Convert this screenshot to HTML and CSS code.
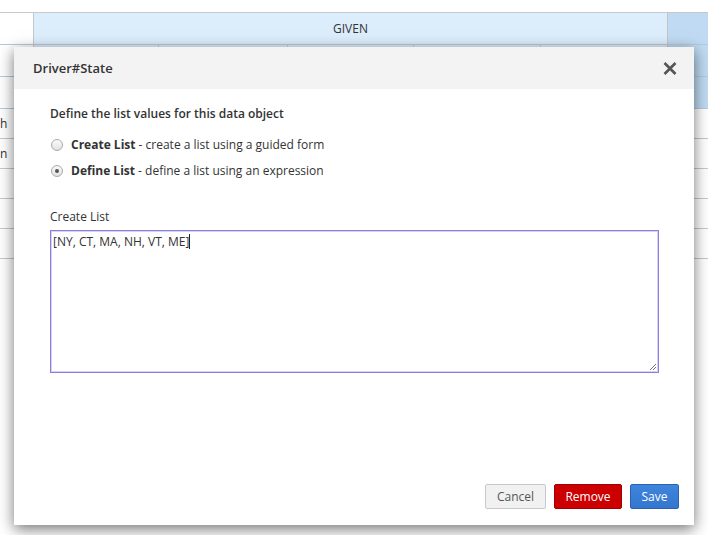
FILE: index.html
```html
<!DOCTYPE html>
<html>
<head>
<meta charset="utf-8">
<link rel="stylesheet" href="styles.css">
</head>
<body>
<div class="sheet">
  <div class="row row-head">
    <div class="c c0"></div>
    <div class="c given">GIVEN</div>
    <div class="c c6 dark"></div>
  </div>
  <div class="row row-sub">
    <div class="c c0"></div>
    <div class="c c1 blue"></div>
    <div class="c c2 blue"></div>
    <div class="c c3 blue"></div>
    <div class="c c4 blue"></div>
    <div class="c c5 blue"></div>
    <div class="c c6 dark"></div>
  </div>
  <div class="row row-sub">
    <div class="c c0"></div>
    <div class="c c1 blue"></div>
    <div class="c c2 blue"></div>
    <div class="c c3 blue"></div>
    <div class="c c4 blue"></div>
    <div class="c c5 blue"></div>
    <div class="c c6 dark"></div>
  </div>
  <div class="row row-data"><div class="cell-text">h</div></div>
  <div class="row row-data"><div class="cell-text">n</div></div>
  <div class="row row-data"></div>
  <div class="row row-data"></div>
  <div class="row row-data"></div>
</div>

<div class="dialog">
  <div class="dialog-head">
    <span class="dialog-title">Driver#State</span>
    <svg class="close" width="14" height="13" viewBox="0 0 14 13">
      <path d="M1.5 1 L12.5 12 M12.5 1 L1.5 12" stroke="#555" stroke-width="2.6" stroke-linecap="butt"/>
    </svg>
  </div>
  <div class="dialog-body">
    <p class="intro">Define the list values for this data object</p>
    <label class="opt"><span class="radio"></span><b>Create List</b>&nbsp;- create a list using a guided form</label>
    <label class="opt"><span class="radio checked"></span><b>Define List</b>&nbsp;- define a list using an expression</label>
    <div class="field-label">Create List</div>
    <div class="textarea">[NY, CT, MA, NH, VT, ME]<span class="caret"></span>
      <svg class="grip" width="8" height="8" viewBox="0 0 8 8"><path d="M7 1 L1 7 M7 4 L4 7" stroke="#777" stroke-width="1"/></svg>
    </div>
  </div>
  <div class="dialog-foot">
    <button class="btn cancel">Cancel</button>
    <button class="btn remove">Remove</button>
    <button class="btn save">Save</button>
  </div>
</div>
</body>
</html>
```

FILE: styles.css
```css
html, body {
  margin: 0;
  padding: 0;
  background: #fff;
  font-family: "Open Sans", "Liberation Sans", sans-serif;
  color: #333;
}
.sheet {
  padding-top: 12px;
}
.row {
  display: grid;
  grid-template-columns: 33px 125px 129px 126px 127px 127px 41px;
}
.row-head {
  border-top: 1px solid #c8c8c8;
  height: 31px;
  border-bottom: 1px solid #b9c9d6;
}
.given {
  grid-column: 2 / 7;
  background: #dcedfb;
  border-left: 1px solid #c8c8c8;
  display: flex;
  align-items: center;
  justify-content: center;
  font-size: 12px;
  color: #333;
}
.dark {
  background: #bfdaf2;
  border-left: 1px solid #c4c4c4;
}
.row-sub {
  height: 31px;
  border-bottom: 1px solid #b9c9d6;
}
.blue {
  background: #dcedfb;
  border-left: 1px solid #c2d3e0;
}
.c1 { border-left: 1px solid #c8c8c8; }
.row-data {
  display: block;
  height: 29px;
  border-bottom: 1px solid #c8c8c8;
}
.cell-text {
  font-size: 12px;
  line-height: 29px;
  padding-left: 0;
  color: #333;
}

.dialog {
  position: absolute;
  left: 14px;
  top: 47px;
  width: 680px;
  height: 478px;
  background: #fff;
  box-shadow: 0 4px 14px rgba(0,0,0,0.55);
  display: flex;
  flex-direction: column;
}
.dialog-head {
  height: 42px;
  background: #f3f3f3;
  display: flex;
  align-items: center;
  justify-content: space-between;
  padding: 0 17px 0 19px;
  flex: none;
}
.dialog-title {
  font-size: 13px;
  font-weight: 600;
  color: #333;
}
.close {
  display: block;
  margin-top: 1px;
}
.dialog-body {
  padding: 16px 35px 0 36px;
  flex: 1;
}
.intro {
  margin: 0 0 9px;
  font-size: 12px;
  font-weight: 600;
  line-height: 18px;
  color: #333;
}
.opt {
  display: flex;
  align-items: center;
  font-size: 12px;
  line-height: 18px;
  height: 26px;
  color: #333;
}
.opt b {
  font-weight: 700;
}
.radio {
  box-sizing: border-box;
  width: 12px;
  height: 12px;
  border-radius: 50%;
  border: 1px solid #aaa;
  background: linear-gradient(#fafafa, #e2e2e2);
  margin: 0 8px 0 1px;
  position: relative;
}
.radio.checked::after {
  content: "";
  position: absolute;
  left: 3px;
  top: 3px;
  width: 4px;
  height: 4px;
  border-radius: 50%;
  background: #555;
}
.field-label {
  font-size: 12px;
  line-height: 18px;
  margin-top: 24px;
  margin-bottom: 4px;
  color: #333;
}
.textarea {
  box-sizing: border-box;
  height: 143px;
  border: 1px solid #8a7fe0;
  box-shadow: 0 0 0 1px rgba(138,127,224,0.35) inset;
  padding: 2px 2px;
  font-size: 12px;
  line-height: 18px;
  color: #333;
  position: relative;
}
.caret {
  display: inline-block;
  width: 1px;
  height: 15px;
  background: #222;
  vertical-align: -3px;
}
.grip {
  position: absolute;
  right: 1px;
  bottom: 1px;
}
.dialog-foot {
  display: flex;
  justify-content: flex-end;
  gap: 8px;
  padding: 0 15px 16px 0;
  flex: none;
}
.btn {
  font-family: "Open Sans", "Liberation Sans", sans-serif;
  font-size: 12px;
  height: 25px;
  border-radius: 2px;
  padding: 0 10px;
  cursor: pointer;
}
.cancel {
  width: 61px;
  background: #f1f1f1;
  border: 1px solid #c9c9c9;
  color: #555;
}
.remove {
  width: 68px;
  background: #c00;
  border: 1px solid #a10000;
  color: #fff;
}
.save {
  width: 49px;
  background: linear-gradient(#3e85dc, #3476cf);
  border: 1px solid #2b63b2;
  color: #fff;
}
```
